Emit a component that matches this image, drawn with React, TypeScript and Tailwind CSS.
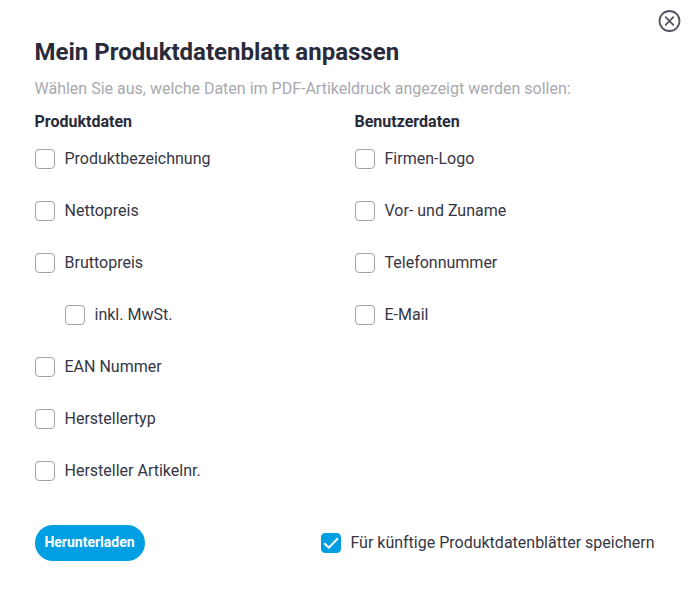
import React from "react";

type Option = {
  label: string;
  indented?: boolean;
};

const productOptions: Option[] = [
  { label: "Produktbezeichnung" },
  { label: "Nettopreis" },
  { label: "Bruttopreis" },
  { label: "inkl. MwSt.", indented: true },
  { label: "EAN Nummer" },
  { label: "Herstellertyp" },
  { label: "Hersteller Artikelnr." },
];

const userOptions: Option[] = [
  { label: "Firmen-Logo" },
  { label: "Vor- und Zuname" },
  { label: "Telefonnummer" },
  { label: "E-Mail" },
];

const Checkbox: React.FC<{ label: string; defaultChecked?: boolean }> = ({
  label,
  defaultChecked,
}) => (
  <label className="flex items-center h-6 cursor-pointer">
    <input type="checkbox" defaultChecked={defaultChecked} className="peer sr-only" />
    <span className="flex items-center justify-center size-5 shrink-0 rounded-[4px] border border-[#a3a4ac] bg-white text-transparent peer-checked:border-[#009fe3] peer-checked:bg-[#009fe3] peer-checked:text-white">
      <svg width="18" height="18" viewBox="0 0 18 18" fill="none" stroke="currentColor" strokeWidth="2">
        <path d="M2.2 9.2L6.8 13.6L16 4.2" />
      </svg>
    </span>
    <span className="ml-[9.5px] whitespace-nowrap">{label}</span>
  </label>
);

const OptionGroup: React.FC<{ title: string; options: Option[] }> = ({ title, options }) => (
  <section className="w-80">
    <h2 className="-ml-[0.5px] font-bold leading-6 text-[#292a3a]">{title}</h2>
    <ul className="mt-[13px] flex flex-col gap-7">
      {options.map((option) => (
        <li key={option.label} className={option.indented ? "pl-[30px]" : ""}>
          <Checkbox label={option.label} />
        </li>
      ))}
    </ul>
  </section>
);

const App: React.FC = () => {
  return (
    <div className="relative w-[691px] h-[605px] overflow-hidden bg-white pl-[35px] pt-9 font-['Roboto',sans-serif] text-base text-[#353644]">
      {/* close */}
      <button type="button" aria-label="Schließen" className="absolute top-[9px] right-[9px] cursor-pointer">
        <svg width="24" height="24" viewBox="0 0 24 24" fill="none" stroke="#535461" strokeWidth="1.8" strokeLinecap="round">
          <circle cx="11.5" cy="12" r="10" />
          <path d="M7.7 8.2L15.3 15.8M15.3 8.2L7.7 15.8" />
        </svg>
      </button>

      {/* header */}
      <h1 className="-ml-[0.5px] text-2xl leading-8 font-bold text-[#292a3a]">
        Mein Produktdatenblatt anpassen
      </h1>
      <p className="-ml-[0.5px] mt-[9px] leading-6 text-[#a9a9af]">
        Wählen Sie aus, welche Daten im PDF-Artikeldruck angezeigt werden sollen:
      </p>

      <div className="mt-[9px] flex">
        <OptionGroup title="Produktdaten" options={productOptions} />
        <OptionGroup title="Benutzerdaten" options={userOptions} />
      </div>

      {/* footer */}
      <div className="mt-[42px] flex items-center justify-between pr-[36.4px]">
        <button
          type="button"
          className="h-9 w-[110px] rounded-full bg-[#009fe3] pb-0.5 pr-px text-sm font-bold text-white cursor-pointer"
        >
          Herunterladen
        </button>
        <Checkbox label="Für künftige Produktdatenblätter speichern" defaultChecked />
      </div>
    </div>
  );
};

export default App;
